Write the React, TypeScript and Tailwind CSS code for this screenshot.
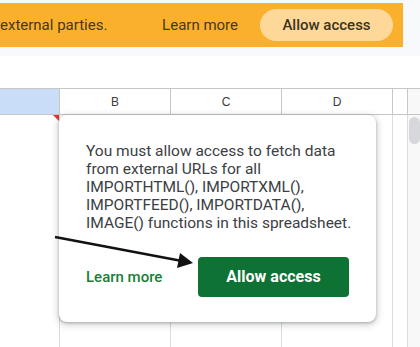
import React from 'react';

const cols = [
  { key: 'A', w: 'w-[60px]', label: '' },
  { key: 'B', w: 'w-[111px]', label: 'B' },
  { key: 'C', w: 'w-[111px]', label: 'C' },
  { key: 'D', w: 'w-[111px]', label: 'D' },
  { key: 'E', w: 'w-[15px]', label: '' },
];

function Banner() {
  return (
    <div className="h-[56px] bg-[#f8f9fc] pt-[3px] pr-[17px]">
      <div className="h-[44px] bg-[#fbb02d] flex items-center justify-between pr-[10px] text-[15px] text-[#45391d] whitespace-nowrap overflow-hidden">
        <span>external parties.</span>
        <div className="flex items-center gap-[22px]">
          <span>Learn more</span>
          <span className="h-[32px] w-[133px] rounded-full bg-[#fdd898] flex items-center justify-center font-medium text-[#3d3320]">
            Allow access
          </span>
        </div>
      </div>
    </div>
  );
}

function Grid() {
  return (
    <div className="flex flex-col h-[259px]">
      <div className="flex h-[27px] border-y border-[#c4c7c5] font-['Liberation_Sans'] text-[12px] text-[#3c3c3c]">
        {cols.map((c) => (
          <div
            key={c.key}
            className={`${c.w} shrink-0 border-r border-[#c4c7c5] flex items-center justify-center ${c.key === 'A' ? 'bg-[#c9dcf8]' : ''}`}
          >
            {c.label}
          </div>
        ))}
        <div className="flex-1 bg-[#f8f8f8]" />
      </div>
      <div className="flex flex-1">
        {cols.map((c) => (
          <div key={c.key} className={`${c.w} shrink-0 border-r border-[#dadcdf] relative`}>
            {c.key === 'A' && (
              <div className="absolute top-0 right-0 w-0 h-0 border-t-[6px] border-t-[#e8302a] border-l-[6px] border-l-transparent" />
            )}
          </div>
        ))}
        <div className="flex-1 bg-[#f8f8f8] pt-[2px] pl-[1px]">
          <div className="h-[27px] w-full rounded-l-full rounded-r-full bg-[#d6d8dc]" />
        </div>
      </div>
    </div>
  );
}

function AccessCard() {
  return (
    <div className="absolute left-[59px] top-[115px] w-[317px] h-[207px] bg-white rounded-[8px] shadow-[0_2px_6px_2px_rgba(60,64,67,0.18),0_1px_3px_rgba(60,64,67,0.35)] flex flex-col pt-[27px] px-[27px] pb-[25px]">
      <p className="text-[15.5px] leading-[18px] text-[#3c4043] whitespace-nowrap">
        You must allow access to fetch data
        <br />
        from external URLs for all
        <br />
        IMPORTHTML(), IMPORTXML(),
        <br />
        IMPORTFEED(), IMPORTDATA(),
        <br />
        IMAGE() functions in this spreadsheet.
      </p>
      <div className="mt-auto flex items-center justify-between">
        <span className="text-[15px] font-medium text-[#188038]">Learn more</span>
        <button className="h-[40px] w-[151px] rounded-[4px] bg-[#0f7235] text-white text-[16px] font-bold">
          Allow access
        </button>
      </div>
    </div>
  );
}

function Arrow() {
  return (
    <svg className="absolute inset-0 pointer-events-none" width="420" height="347" viewBox="0 0 420 347">
      <line x1="55" y1="237" x2="182" y2="261" stroke="#111" strokeWidth="2.5" />
      <polygon points="193,263 180,253 177,268" fill="#111" />
    </svg>
  );
}

export default function App() {
  return (
    <div className="relative w-[420px] h-[347px] overflow-hidden bg-white font-['Roboto',sans-serif]">
      <Banner />
      <div className="h-[32px]" />
      <Grid />
      <AccessCard />
      <Arrow />
    </div>
  );
}
